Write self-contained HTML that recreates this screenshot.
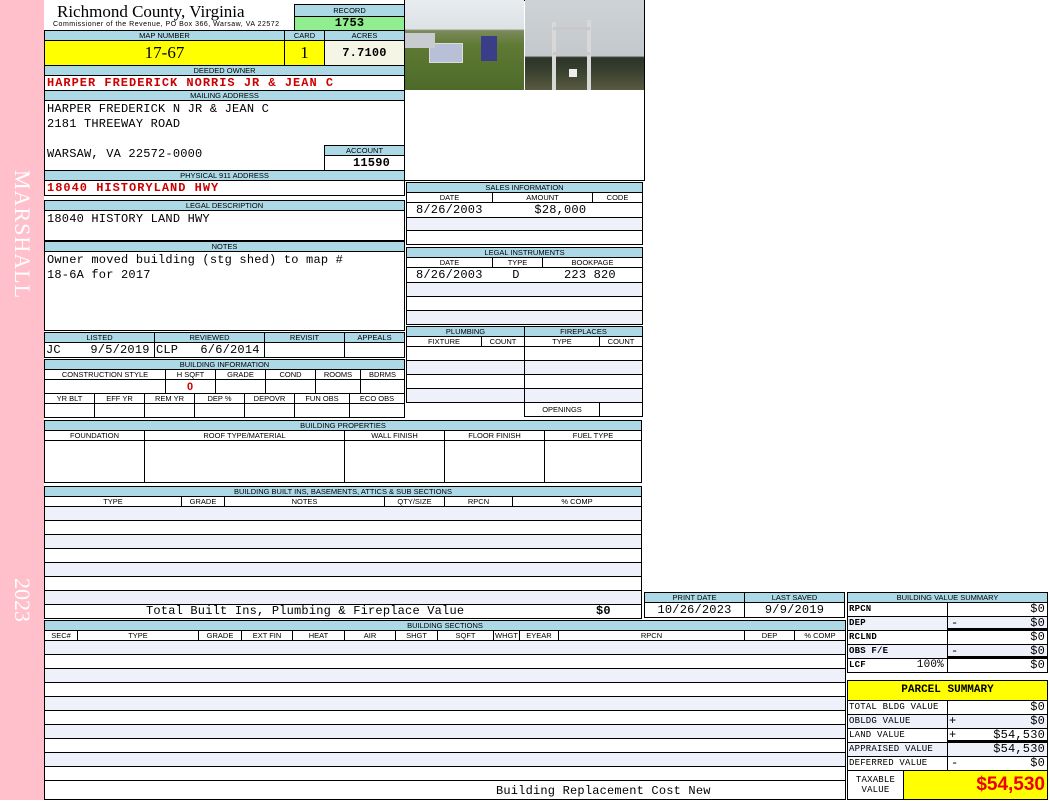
<!DOCTYPE html>
<html><head><meta charset="utf-8"><style>
*{margin:0;padding:0;box-sizing:border-box}
body{width:1050px;height:800px;position:relative;background:#fff;overflow:hidden;font-family:"Liberation Sans",sans-serif}
div{position:absolute}
.b{border:1px solid #000}
.h{background:#add8e6;border:1px solid #000;font-size:7.5px;text-align:center;line-height:9px;color:#000;overflow:hidden;white-space:nowrap}
.c{border:1px solid #000;font-size:7.5px;text-align:center;line-height:9px;background:#fff;white-space:nowrap;overflow:hidden}
.m{font-family:"Liberation Mono",monospace;font-size:12px;letter-spacing:0.2px;white-space:pre}
.r{color:#c00;font-weight:bold;letter-spacing:1px}
.l{background:#eef0fa}
</style></head><body>
<!-- sidebar -->
<div style="left:0;top:0;width:44px;height:800px;background:#ffc0cb"></div>
<div style="left:5px;top:170px;width:34px;height:140px;"><div style="left:0;top:0;width:145px;height:34px;transform-origin:0 0;transform:translate(34px,0) rotate(90deg);color:#fff;font:22px 'Liberation Serif',serif;letter-spacing:1px;line-height:34px;text-align:left;white-space:nowrap">MARSHALL</div></div>
<div style="left:5px;top:578px;width:34px;height:60px;"><div style="left:0;top:0;width:60px;height:34px;transform-origin:0 0;transform:translate(34px,0) rotate(90deg);color:#fff;font:22px 'Liberation Serif',serif;line-height:34px">2023</div></div>

<!-- header -->
<div style="left:57px;top:2px;font:17px 'Liberation Serif',serif;line-height:20px">Richmond County, Virginia</div>
<div style="left:53px;top:20px;font-size:7px;letter-spacing:0.5px;line-height:9px;white-space:nowrap">Commissioner of the Revenue, PO Box 366, Warsaw, VA 22572</div>
<div class="h" style="left:294px;top:4px;width:111px;height:13px;line-height:11px">RECORD</div>
<div class="b m" style="left:294px;top:16px;width:111px;height:15px;background:#90ee90;text-align:center;font-weight:bold;line-height:13px">1753</div>
<div class="h" style="left:44px;top:30px;width:241px;height:11px">MAP NUMBER</div>
<div class="h" style="left:284px;top:30px;width:41px;height:11px">CARD</div>
<div class="h" style="left:324px;top:30px;width:81px;height:11px">ACRES</div>
<div class="b" style="left:44px;top:40px;width:241px;height:26px;background:#ffff00;font:17px 'Liberation Serif',serif;text-align:center;line-height:24px">17-67</div>
<div class="b" style="left:284px;top:40px;width:41px;height:26px;background:#ffff00;font:17px 'Liberation Serif',serif;text-align:center;line-height:24px">1</div>
<div class="b m" style="left:324px;top:40px;width:81px;height:26px;background:#f5f5e6;text-align:center;font-weight:bold;line-height:24px">7.7100</div>
<div class="h" style="left:44px;top:65px;width:361px;height:11px">DEEDED OWNER</div>
<div class="b m r" style="left:44px;top:75px;width:361px;height:16px;line-height:15px;padding-left:2px">HARPER FREDERICK NORRIS JR &amp; JEAN C</div>
<div class="h" style="left:44px;top:90px;width:361px;height:11px">MAILING ADDRESS</div>
<div class="b m" style="left:44px;top:100px;width:361px;height:71px;line-height:15px;padding:1px 2px">HARPER FREDERICK N JR &amp; JEAN C
2181 THREEWAY ROAD

WARSAW, VA 22572-0000</div>
<div class="h" style="left:324px;top:145px;width:81px;height:11px">ACCOUNT</div>
<div class="b m" style="left:324px;top:155px;width:81px;height:16px;text-align:center;font-weight:bold;line-height:14px;padding-left:14px">11590</div>
<div class="h" style="left:44px;top:170px;width:361px;height:11px">PHYSICAL 911 ADDRESS</div>
<div class="b m r" style="left:44px;top:180px;width:361px;height:16px;line-height:15px;padding-left:2px">18040 HISTORYLAND HWY</div>
<div class="h" style="left:44px;top:200px;width:361px;height:11px">LEGAL DESCRIPTION</div>
<div class="b m" style="left:44px;top:210px;width:361px;height:31px;padding:1px 2px;line-height:15px">18040 HISTORY LAND HWY</div>
<div class="h" style="left:44px;top:241px;width:361px;height:11px">NOTES</div>
<div class="b m" style="left:44px;top:251px;width:361px;height:80px;padding:1px 2px;line-height:15px">Owner moved building (stg shed) to map #
18-6A for 2017</div>

<!-- photo -->
<div class="b" style="left:404px;top:0;width:241px;height:181px"></div>
<div style="left:405px;top:0;width:119px;height:90px;background:linear-gradient(#e8ecef 0,#dde2e6 32%,#7d8a5c 34%,#5f7a34 50%,#4d6a2a 100%)">
 <div style="left:24px;top:43px;width:34px;height:20px;background:#b8c0d8;border:1px solid #ddd"></div>
 <div style="left:76px;top:36px;width:16px;height:25px;background:#3a3e88"></div>
 <div style="left:0;top:33px;width:30px;height:15px;background:#c8ccd0"></div>
</div>
<div style="left:525px;top:0;width:119px;height:90px;background:linear-gradient(#cfd3d6 0,#c3c8cc 62%,#2c3328 64%,#3a4230 80%,#5a5a40 100%)">
 <div style="left:27px;top:22px;width:4px;height:68px;background:#d8d8d8"></div>
 <div style="left:62px;top:20px;width:4px;height:70px;background:#d8d8d8"></div>
 <div style="left:28px;top:27px;width:37px;height:3px;background:#c8c8c8"></div>
 <div style="left:28px;top:52px;width:37px;height:3px;background:#c8c8c8"></div>
 <div style="left:44px;top:69px;width:8px;height:8px;background:#eee"></div>
</div>

<!-- listed -->
<div class="h" style="left:44px;top:332px;width:111px;height:11px">LISTED</div>
<div class="h" style="left:154px;top:332px;width:111px;height:11px">REVIEWED</div>
<div class="h" style="left:264px;top:332px;width:81px;height:11px">REVISIT</div>
<div class="h" style="left:344px;top:332px;width:61px;height:11px">APPEALS</div>
<div class="b m" style="left:44px;top:342px;width:111px;height:16px;line-height:14px;padding-left:1px">JC    9/5/2019</div>
<div class="b m" style="left:154px;top:342px;width:111px;height:16px;line-height:14px;padding-left:1px">CLP   6/6/2014</div>
<div class="b" style="left:264px;top:342px;width:81px;height:16px"></div>
<div class="b" style="left:344px;top:342px;width:61px;height:16px"></div>

<!-- building info -->
<div class="h" style="left:44px;top:359px;width:361px;height:11px">BUILDING INFORMATION</div>
<div class="c" style="left:44px;top:369px;width:122px;height:11px">CONSTRUCTION STYLE</div>
<div class="c" style="left:165px;top:369px;width:51px;height:11px">H SQFT</div>
<div class="c" style="left:215px;top:369px;width:51px;height:11px">GRADE</div>
<div class="c" style="left:265px;top:369px;width:51px;height:11px">COND</div>
<div class="c" style="left:315px;top:369px;width:46px;height:11px">ROOMS</div>
<div class="c" style="left:360px;top:369px;width:45px;height:11px">BDRMS</div>
<div class="b" style="left:44px;top:379px;width:122px;height:15px"></div>
<div class="b r" style="left:165px;top:379px;width:51px;height:15px;text-align:center;font-size:11px;line-height:14px">0</div>
<div class="b" style="left:215px;top:379px;width:51px;height:15px"></div>
<div class="b" style="left:265px;top:379px;width:51px;height:15px"></div>
<div class="b" style="left:315px;top:379px;width:46px;height:15px"></div>
<div class="b" style="left:360px;top:379px;width:45px;height:15px"></div>
<div class="c" style="left:44px;top:393px;width:51px;height:11px">YR BLT</div>
<div class="c" style="left:94px;top:393px;width:51px;height:11px">EFF YR</div>
<div class="c" style="left:144px;top:393px;width:51px;height:11px">REM YR</div>
<div class="c" style="left:194px;top:393px;width:51px;height:11px">DEP %</div>
<div class="c" style="left:244px;top:393px;width:51px;height:11px">DEPOVR</div>
<div class="c" style="left:294px;top:393px;width:56px;height:11px">FUN OBS</div>
<div class="c" style="left:349px;top:393px;width:56px;height:11px">ECO OBS</div>
<div class="b" style="left:44px;top:403px;width:51px;height:15px"></div>
<div class="b" style="left:94px;top:403px;width:51px;height:15px"></div>
<div class="b" style="left:144px;top:403px;width:51px;height:15px"></div>
<div class="b" style="left:194px;top:403px;width:51px;height:15px"></div>
<div class="b" style="left:244px;top:403px;width:51px;height:15px"></div>
<div class="b" style="left:294px;top:403px;width:56px;height:15px"></div>
<div class="b" style="left:349px;top:403px;width:56px;height:15px"></div>

<!-- sales -->
<div class="h" style="left:406px;top:182px;width:237px;height:11px">SALES INFORMATION</div>
<div class="c" style="left:406px;top:192px;width:87px;height:11px">DATE</div>
<div class="c" style="left:492px;top:192px;width:101px;height:11px">AMOUNT</div>
<div class="c" style="left:592px;top:192px;width:51px;height:11px">CODE</div>
<div class="b m" style="left:406px;top:202px;width:237px;height:16px;line-height:14px;padding-left:9px">8/26/2003       $28,000</div>
<div class="b l" style="left:406px;top:217px;width:237px;height:14px"></div>
<div class="b" style="left:406px;top:230px;width:237px;height:15px"></div>
<!-- legal instruments -->
<div class="h" style="left:406px;top:247px;width:237px;height:11px">LEGAL INSTRUMENTS</div>
<div class="c" style="left:406px;top:257px;width:87px;height:11px">DATE</div>
<div class="c" style="left:492px;top:257px;width:51px;height:11px">TYPE</div>
<div class="c" style="left:542px;top:257px;width:101px;height:11px">BOOKPAGE</div>
<div class="b m" style="left:406px;top:267px;width:237px;height:16px;line-height:14px;padding-left:9px">8/26/2003    D      223 820</div>
<div class="b l" style="left:406px;top:282px;width:237px;height:15px"></div>
<div class="b" style="left:406px;top:296px;width:237px;height:15px"></div>
<div class="b l" style="left:406px;top:310px;width:237px;height:15px"></div>
<!-- plumbing -->
<div class="h" style="left:406px;top:326px;width:119px;height:11px">PLUMBING</div>
<div class="h" style="left:524px;top:326px;width:119px;height:11px">FIREPLACES</div>
<div class="c" style="left:406px;top:336px;width:76px;height:11px">FIXTURE</div>
<div class="c" style="left:481px;top:336px;width:44px;height:11px">COUNT</div>
<div class="c" style="left:524px;top:336px;width:76px;height:11px">TYPE</div>
<div class="c" style="left:599px;top:336px;width:44px;height:11px">COUNT</div>
<div class="b" style="left:406px;top:346px;width:119px;height:15px"></div>
<div class="b l" style="left:406px;top:360px;width:119px;height:15px"></div>
<div class="b" style="left:406px;top:374px;width:119px;height:15px"></div>
<div class="b l" style="left:406px;top:388px;width:119px;height:15px"></div>
<div class="b" style="left:524px;top:346px;width:119px;height:15px"></div>
<div class="b l" style="left:524px;top:360px;width:119px;height:15px"></div>
<div class="b" style="left:524px;top:374px;width:119px;height:15px"></div>
<div class="b l" style="left:524px;top:388px;width:119px;height:15px"></div>
<div class="c" style="left:524px;top:402px;width:76px;height:15px;line-height:13px">OPENINGS</div>
<div class="b" style="left:599px;top:402px;width:44px;height:15px"></div>

<!-- building properties -->
<div class="h" style="left:44px;top:420px;width:598px;height:11px">BUILDING PROPERTIES</div>
<div class="c" style="left:44px;top:430px;width:101px;height:11px">FOUNDATION</div>
<div class="c" style="left:144px;top:430px;width:201px;height:11px">ROOF TYPE/MATERIAL</div>
<div class="c" style="left:344px;top:430px;width:101px;height:11px">WALL FINISH</div>
<div class="c" style="left:444px;top:430px;width:101px;height:11px">FLOOR FINISH</div>
<div class="c" style="left:544px;top:430px;width:98px;height:11px">FUEL TYPE</div>
<div class="b" style="left:44px;top:440px;width:101px;height:43px"></div>
<div class="b" style="left:144px;top:440px;width:201px;height:43px"></div>
<div class="b" style="left:344px;top:440px;width:101px;height:43px"></div>
<div class="b" style="left:444px;top:440px;width:101px;height:43px"></div>
<div class="b" style="left:544px;top:440px;width:98px;height:43px"></div>

<!-- built ins -->
<div class="h" style="left:44px;top:486px;width:598px;height:11px">BUILDING BUILT INS, BASEMENTS, ATTICS &amp; SUB SECTIONS</div>
<div class="c" style="left:44px;top:496px;width:138px;height:11px">TYPE</div>
<div class="c" style="left:181px;top:496px;width:44px;height:11px">GRADE</div>
<div class="c" style="left:224px;top:496px;width:161px;height:11px">NOTES</div>
<div class="c" style="left:384px;top:496px;width:61px;height:11px">QTY/SIZE</div>
<div class="c" style="left:444px;top:496px;width:69px;height:11px">RPCN</div>
<div class="c" style="left:512px;top:496px;width:130px;height:11px">% COMP</div>
<div class="b l" style="left:44px;top:506px;width:598px;height:15px"></div>
<div class="b" style="left:44px;top:520px;width:598px;height:15px"></div>
<div class="b l" style="left:44px;top:534px;width:598px;height:15px"></div>
<div class="b" style="left:44px;top:548px;width:598px;height:15px"></div>
<div class="b l" style="left:44px;top:562px;width:598px;height:15px"></div>
<div class="b" style="left:44px;top:576px;width:598px;height:15px"></div>
<div class="b l" style="left:44px;top:590px;width:598px;height:15px"></div>
<div class="b m" style="left:44px;top:604px;width:598px;height:15px;line-height:13px;padding-left:101px">Total Built Ins, Plumbing &amp; Fireplace Value<span style="position:absolute;left:551px;font-weight:bold">$0</span></div>

<!-- print date -->
<div class="h" style="left:644px;top:592px;width:101px;height:11px">PRINT DATE</div>
<div class="h" style="left:744px;top:592px;width:101px;height:11px">LAST SAVED</div>
<div class="b m" style="left:644px;top:602px;width:101px;height:16px;text-align:center;line-height:14px">10/26/2023</div>
<div class="b m" style="left:744px;top:602px;width:101px;height:16px;text-align:center;line-height:14px">9/9/2019</div>

<!-- building sections -->
<div class="h" style="left:44px;top:620px;width:802px;height:11px">BUILDING SECTIONS</div>
<div class="c" style="left:44px;top:630px;width:34px;height:11px">SEC#</div>
<div class="c" style="left:77px;top:630px;width:122px;height:11px">TYPE</div>
<div class="c" style="left:198px;top:630px;width:44px;height:11px">GRADE</div>
<div class="c" style="left:241px;top:630px;width:52px;height:11px">EXT FIN</div>
<div class="c" style="left:292px;top:630px;width:53px;height:11px">HEAT</div>
<div class="c" style="left:344px;top:630px;width:52px;height:11px">AIR</div>
<div class="c" style="left:395px;top:630px;width:43px;height:11px">SHGT</div>
<div class="c" style="left:437px;top:630px;width:57px;height:11px">SQFT</div>
<div class="c" style="left:493px;top:630px;width:27px;height:11px">WHGT</div>
<div class="c" style="left:519px;top:630px;width:40px;height:11px">EYEAR</div>
<div class="c" style="left:558px;top:630px;width:187px;height:11px">RPCN</div>
<div class="c" style="left:744px;top:630px;width:51px;height:11px">DEP</div>
<div class="c" style="left:794px;top:630px;width:52px;height:11px">% COMP</div>
<div class="b l" style="left:44px;top:640px;width:802px;height:15px"></div>
<div class="b" style="left:44px;top:654px;width:802px;height:15px"></div>
<div class="b l" style="left:44px;top:668px;width:802px;height:15px"></div>
<div class="b" style="left:44px;top:682px;width:802px;height:15px"></div>
<div class="b l" style="left:44px;top:696px;width:802px;height:15px"></div>
<div class="b" style="left:44px;top:710px;width:802px;height:15px"></div>
<div class="b l" style="left:44px;top:724px;width:802px;height:15px"></div>
<div class="b" style="left:44px;top:738px;width:802px;height:15px"></div>
<div class="b l" style="left:44px;top:752px;width:802px;height:15px"></div>
<div class="b" style="left:44px;top:766px;width:802px;height:15px"></div>
<div class="b m" style="left:44px;top:780px;width:802px;height:20px;line-height:20px;padding-left:451px">Building Replacement Cost New</div>

<!-- building value summary -->
<div class="h" style="left:847px;top:592px;width:201px;height:11px">BUILDING VALUE SUMMARY</div>
<div class="b m" style="left:847px;top:602px;width:101px;height:15px;font-size:9px;line-height:13px;padding-left:1px;font-weight:bold">RPCN</div>
<div class="b m" style="left:947px;top:602px;width:101px;height:15px;text-align:right;line-height:13px;padding-right:2px">$0</div>
<div class="b m l" style="left:847px;top:616px;width:101px;height:15px;font-size:9px;line-height:13px;padding-left:1px;font-weight:bold">DEP</div>
<div class="b m l" style="left:947px;top:616px;width:101px;height:15px;text-align:right;line-height:13px;padding-right:2px;border-bottom:3px solid #000"><span style="position:absolute;left:3px">-</span>$0</div>
<div class="b m" style="left:847px;top:630px;width:101px;height:15px;font-size:9px;line-height:13px;padding-left:1px;font-weight:bold">RCLND</div>
<div class="b m" style="left:947px;top:630px;width:101px;height:15px;text-align:right;line-height:13px;padding-right:2px">$0</div>
<div class="b m l" style="left:847px;top:644px;width:101px;height:15px;font-size:9px;line-height:13px;padding-left:1px;font-weight:bold">OBS F/E</div>
<div class="b m l" style="left:947px;top:644px;width:101px;height:15px;text-align:right;line-height:13px;padding-right:2px;border-bottom:3px solid #000"><span style="position:absolute;left:3px">-</span>$0</div>
<div class="b m" style="left:847px;top:658px;width:101px;height:15px;font-size:9px;line-height:13px;padding-left:1px;font-weight:bold">LCF<span style="position:absolute;right:3px;font-weight:normal;font-size:11px">100%</span></div>
<div class="b m" style="left:947px;top:658px;width:101px;height:15px;text-align:right;line-height:13px;padding-right:2px">$0</div>

<!-- parcel summary -->
<div class="b" style="left:847px;top:680px;width:201px;height:21px;background:#ffff00;font:bold 11px 'Liberation Mono',monospace;text-align:center;line-height:19px">PARCEL SUMMARY</div>
<div class="b m" style="left:847px;top:700px;width:101px;height:15px;font-size:9px;line-height:13px;padding-left:1px">TOTAL BLDG VALUE</div>
<div class="b m" style="left:947px;top:700px;width:101px;height:15px;text-align:right;line-height:13px;padding-right:2px">$0</div>
<div class="b m l" style="left:847px;top:714px;width:101px;height:15px;font-size:9px;line-height:13px;padding-left:1px">OBLDG VALUE</div>
<div class="b m l" style="left:947px;top:714px;width:101px;height:15px;text-align:right;line-height:13px;padding-right:2px"><span style="position:absolute;left:1px">+</span>$0</div>
<div class="b m" style="left:847px;top:728px;width:101px;height:15px;font-size:9px;line-height:13px;padding-left:1px">LAND VALUE</div>
<div class="b m" style="left:947px;top:728px;width:101px;height:15px;text-align:right;line-height:13px;padding-right:2px;border-bottom:3px solid #000"><span style="position:absolute;left:1px">+</span>$54,530</div>
<div class="b m l" style="left:847px;top:742px;width:101px;height:15px;font-size:9px;line-height:13px;padding-left:1px">APPRAISED VALUE</div>
<div class="b m l" style="left:947px;top:742px;width:101px;height:15px;text-align:right;line-height:13px;padding-right:2px">$54,530</div>
<div class="b m" style="left:847px;top:756px;width:101px;height:15px;font-size:9px;line-height:13px;padding-left:1px">DEFERRED VALUE</div>
<div class="b m" style="left:947px;top:756px;width:101px;height:15px;text-align:right;line-height:13px;padding-right:2px"><span style="position:absolute;left:3px">-</span>$0</div>
<div class="b m" style="left:847px;top:770px;width:57px;height:30px;font-size:9px;line-height:10px;text-align:center;padding-top:4px">TAXABLE
VALUE</div>
<div class="b" style="left:903px;top:770px;width:145px;height:30px;background:#ffff00;color:#e00;font:bold 19px 'Liberation Sans',sans-serif;text-align:right;line-height:28px;padding-right:2px">$54,530</div>
</body></html>
